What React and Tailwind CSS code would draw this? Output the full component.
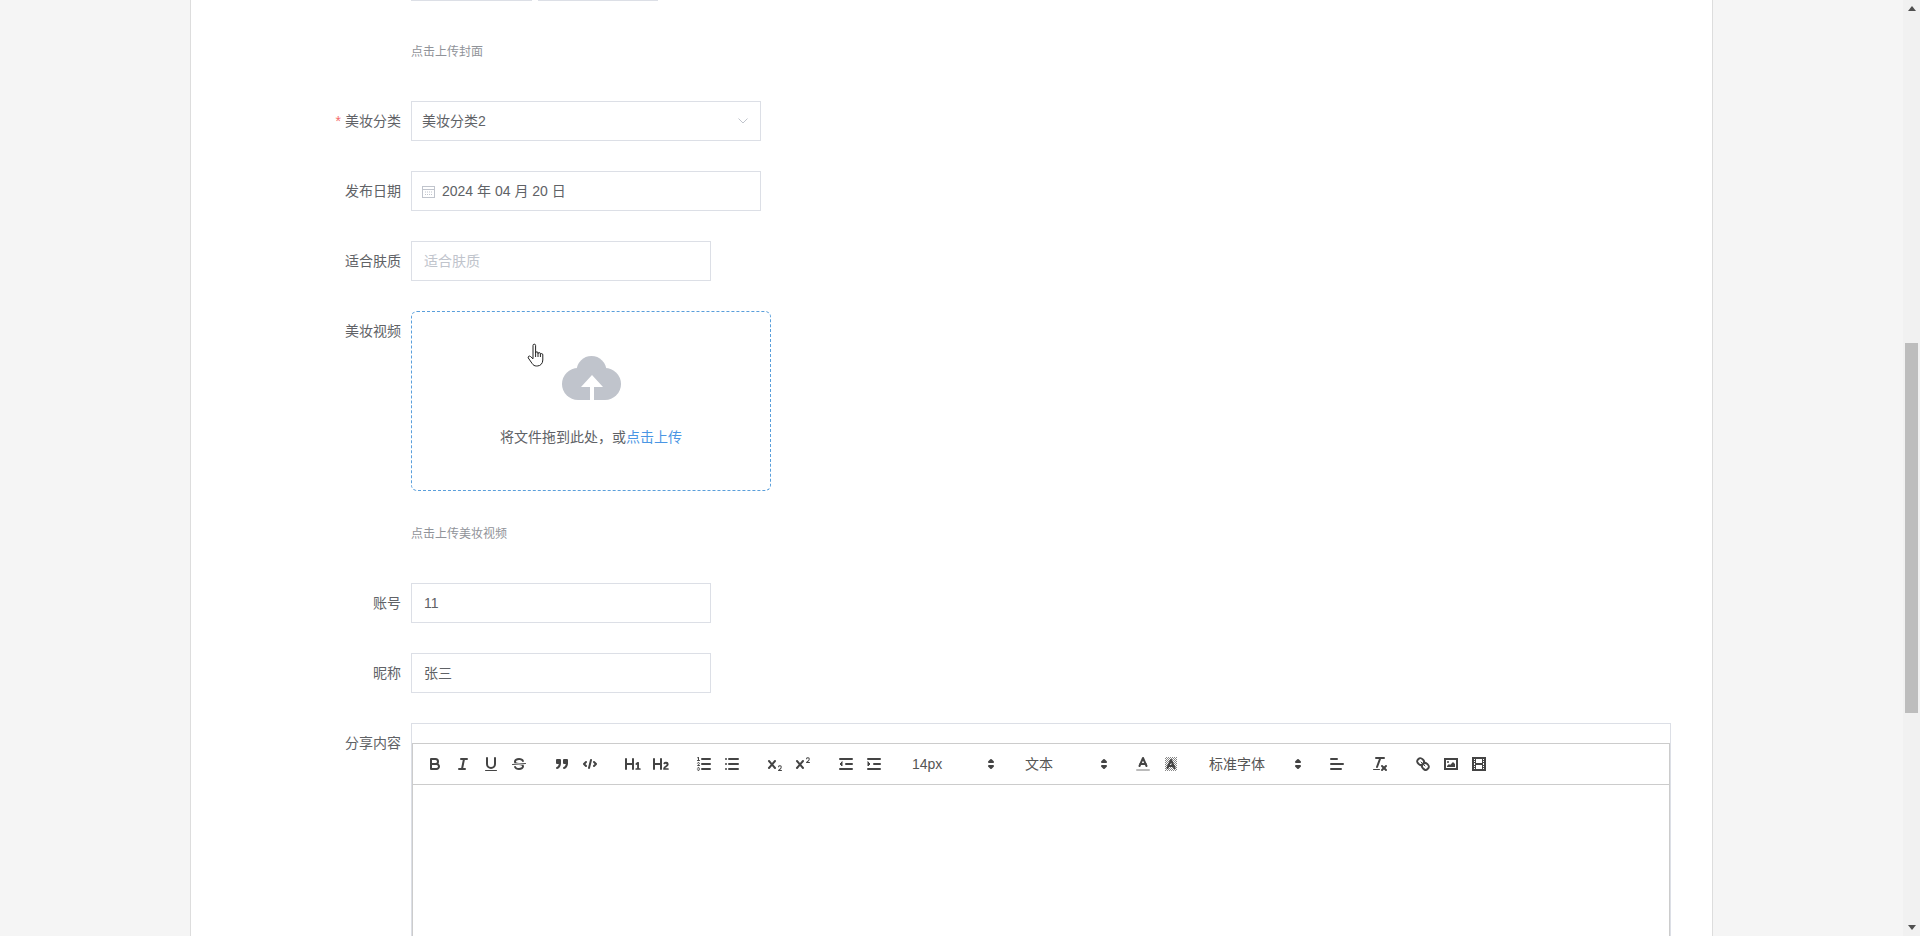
const FONT = "font-['Liberation_Sans','Noto_Sans_CJK_SC',sans-serif]";

function Icon({ children }) {
  return (
    <span className="flex h-6 w-7 items-center justify-center">
      <svg
        viewBox="0 0 18 18"
        className="h-[18px] w-[18px]"
        fill="none"
        stroke="#444"
        strokeWidth="2"
        strokeLinecap="round"
        strokeLinejoin="round"
      >
        {children}
      </svg>
    </span>
  );
}

function Picker({ label, width }) {
  return (
    <span className={`flex h-6 items-center justify-between pl-[9px] pr-[1px] text-sm text-[#555] ${width}`}>
      {label}
      <svg viewBox="0 0 18 18" className="h-[18px] w-[18px]" fill="#444" stroke="#444" strokeWidth="2" strokeLinejoin="round">
        <polygon points="7 11 9 13 11 11 7 11" />
        <polygon points="7 7 9 5 11 7 7 7" />
      </svg>
    </span>
  );
}

function Toolbar() {
  return (
    <div className="flex h-[42px] items-center gap-[15px] border-y border-[#ccc] px-2">
      <div className="flex">
        <Icon>
          <path d="M5,4H9.5A2.5,2.5,0,0,1,12,6.5v0A2.5,2.5,0,0,1,9.5,9H5A0,0,0,0,1,5,9V4A0,0,0,0,1,5,4Z" />
          <path d="M5,9h5.5A2.5,2.5,0,0,1,13,11.5v0A2.5,2.5,0,0,1,10.5,14H5a0,0,0,0,1,0,0V9A0,0,0,0,1,5,9Z" />
        </Icon>
        <Icon>
          <line x1="7" x2="13" y1="4" y2="4" />
          <line x1="5" x2="11" y1="14" y2="14" />
          <line x1="8" x2="10" y1="14" y2="4" />
        </Icon>
        <Icon>
          <path d="M5,3V9a4.012,4.012,0,0,0,4,4H9a4.012,4.012,0,0,0,4-4V3" />
          <rect x="3" y="15" width="12" height="1" rx=".5" ry=".5" fill="#444" stroke="none" />
        </Icon>
        <Icon>
          <line x1="15.5" x2="2.5" y1="8.5" y2="9.5" strokeWidth="1" />
          <path fill="#444" stroke="none" d="M9.007,8C6.542,7.791,6,7.519,6,6.5,6,5.792,7.283,5,9,5c1.571,0,2.765.679,2.969,1.309a1,1,0,0,0,1.9-.617C13.356,4.106,11.354,3,9,3,6.2,3,4,4.538,4,6.5a3.2,3.2,0,0,0,.5,1.843Z" />
          <path fill="#444" stroke="none" d="M8.984,10C11.457,10.208,12,10.479,12,11.5c0,.708-1.283,1.5-3,1.5-1.571,0-2.765-.679-2.969-1.309a1,1,0,1,0-1.9.617C4.644,13.894,6.646,15,9,15c2.8,0,5-1.538,5-3.5a3.2,3.2,0,0,0-.5-1.843Z" />
        </Icon>
      </div>
      <div className="flex">
        <Icon>
          <rect x="4" y="5" width="3" height="3" fill="#444" />
          <rect x="11" y="5" width="3" height="3" fill="#444" />
          <path d="M7,8c0,4.031-3,5-3,5" fill="#444" />
          <path d="M14,8c0,4.031-3,5-3,5" fill="#444" />
        </Icon>
        <Icon>
          <polyline points="5 7 3 9 5 11" />
          <polyline points="13 7 15 9 13 11" />
          <line x1="10" x2="8" y1="5" y2="13" />
        </Icon>
      </div>
      <div className="flex">
        <Icon>
          <path fill="#444" stroke="none" d="M10,4V14a1,1,0,0,1-2,0V10H3v4a1,1,0,0,1-2,0V4A1,1,0,0,1,3,4V8H8V4a1,1,0,0,1,2,0Zm6.06787,9.209H14.98975V7.59863a.54085.54085,0,0,0-.605-.60547h-.62744a1.01119,1.01119,0,0,0-.748.29688L11.645,8.56641a.5435.5435,0,0,0-.022.8584l.28613.30762a.53861.53861,0,0,0,.84717.0332l.09912-.08789a1.2137,1.2137,0,0,0,.2417-.35254h.02246s-.01123.30859-.01123.60547V13.209H12.041a.54085.54085,0,0,0-.605.60547v.43945a.54085.54085,0,0,0,.605.60547h4.02686a.54085.54085,0,0,0,.605-.60547v-.43945A.54085.54085,0,0,0,16.06787,13.209Z" />
        </Icon>
        <Icon>
          <path fill="#444" stroke="none" d="M16.73975,13.81445v.43945a.54085.54085,0,0,1-.605.60547H11.855a.58392.58392,0,0,1-.64893-.60547V14.0127c0-2.90527,3.39941-3.42187,3.39941-4.55469a.77675.77675,0,0,0-.84717-.78125,1.17684,1.17684,0,0,0-.83594.38477c-.2749.26367-.561.374-.85791.13184l-.4292-.34082c-.30811-.24219-.38525-.51758-.1543-.81445a2.97155,2.97155,0,0,1,2.45361-1.17676,2.45393,2.45393,0,0,1,2.68408,2.40918c0,2.45312-3.1792,2.92676-3.27832,3.93848h2.79443A.54085.54085,0,0,1,16.73975,13.81445ZM9,3A.99974.99974,0,0,0,8,4V8H3V4A1,1,0,0,0,1,4V14a1,1,0,0,0,2,0V10H8v4a1,1,0,0,0,2,0V4A.99974.99974,0,0,0,9,3Z" />
        </Icon>
      </div>
      <div className="flex">
        <Icon>
          <line x1="7" x2="15" y1="4" y2="4" />
          <line x1="7" x2="15" y1="9" y2="9" />
          <line x1="7" x2="15" y1="14" y2="14" />
          <line x1="2.5" x2="4.5" y1="5.5" y2="5.5" strokeWidth="1" />
          <path fill="#444" stroke="none" d="M3.5,6A0.5,0.5,0,0,1,3,5.5V3.085l-0.276.138A0.5,0.5,0,0,1,2.053,3c-0.124-.247-0.023-0.324.224-0.447l1-.5A0.5,0.5,0,0,1,4,2.5v3A0.5,0.5,0,0,1,3.5,6Z" />
          <path strokeWidth="1" d="M4.5,10.5h-2c0-.234,1.85-1.076,1.85-2.234A0.959,0.959,0,0,0,2.5,8.156" />
          <path strokeWidth="1" d="M2.5,14.846a0.959,0.959,0,0,0,1.85-.109A0.7,0.7,0,0,0,3.75,14a0.688,0.688,0,0,0,.6-0.736,0.959,0.959,0,0,0-1.85-.109" />
        </Icon>
        <Icon>
          <line x1="6" x2="15" y1="4" y2="4" />
          <line x1="6" x2="15" y1="9" y2="9" />
          <line x1="6" x2="15" y1="14" y2="14" />
          <line x1="3" x2="3" y1="4" y2="4" />
          <line x1="3" x2="3" y1="9" y2="9" />
          <line x1="3" x2="3" y1="14" y2="14" />
        </Icon>
      </div>
      <div className="flex">
        <Icon>
          <path fill="#444" stroke="none" d="M15.5,15H13.861a3.858,3.858,0,0,0,1.914-2.975,1.8,1.8,0,0,0-1.6-1.751A1.921,1.921,0,0,0,12.021,11.7a0.50013,0.50013,0,1,0,.957.291h0a0.914,0.914,0,0,1,1.053-.725,0.81,0.81,0,0,1,.744.762c0,1.076-1.16971,1.86982-1.93971,2.43082A1.45639,1.45639,0,0,0,12,15.5a0.5,0.5,0,0,0,.5.5h3A0.5,0.5,0,0,0,15.5,15Z" />
          <path fill="#444" stroke="none" d="M9.65,5.241a1,1,0,0,0-1.409.108L6,7.964,3.759,5.349A1,1,0,0,0,2.192,6.59178Q2.21541,6.6213,2.241,6.649L4.684,9.5,2.241,12.35A1,1,0,0,0,3.71,13.70722q0.02557-.02768.049-0.05722L6,11.036,8.241,13.65a1,1,0,1,0,1.567-1.24277Q9.78459,12.3777,9.759,12.35L7.316,9.5,9.759,6.651A1,1,0,0,0,9.65,5.241Z" />
        </Icon>
        <Icon>
          <path fill="#444" stroke="none" d="M15.5,7H13.861a4.015,4.015,0,0,0,1.914-2.975,1.8,1.8,0,0,0-1.6-1.751A1.922,1.922,0,0,0,12.021,3.7a0.5,0.5,0,1,0,.957.291,0.917,0.917,0,0,1,1.053-.725,0.81,0.81,0,0,1,.744.762c0,1.077-1.164,1.925-1.934,2.486A1.423,1.423,0,0,0,12,7.5a0.5,0.5,0,0,0,.5.5h3A0.5,0.5,0,0,0,15.5,7Z" />
          <path fill="#444" stroke="none" d="M9.651,5.241a1,1,0,0,0-1.41.108L6,7.964,3.759,5.349a1,1,0,1,0-1.519,1.3L4.683,9.5,2.241,12.35a1,1,0,1,0,1.519,1.3L6,11.036l2.241,2.615a1,1,0,0,0,1.519-1.3L7.317,9.5,9.759,6.651A1,1,0,0,0,9.651,5.241Z" />
        </Icon>
      </div>
      <div className="flex">
        <Icon>
          <line x1="3" x2="15" y1="14" y2="14" />
          <line x1="3" x2="15" y1="4" y2="4" />
          <line x1="9" x2="15" y1="9" y2="9" />
          <polyline points="5 7 5 11 3 9 5 7" fill="#444" strokeWidth="1" />
        </Icon>
        <Icon>
          <line x1="3" x2="15" y1="14" y2="14" />
          <line x1="3" x2="15" y1="4" y2="4" />
          <line x1="9" x2="15" y1="9" y2="9" />
          <polyline points="3 7 3 11 5 9 3 7" fill="#444" strokeWidth="1" />
        </Icon>
      </div>
      <Picker label="14px" width="w-[98px]" />
      <Picker label="文本" width="w-[98px]" />
      <div className="flex">
        <Icon>
          <line x1="3" x2="15" y1="15" y2="15" stroke="#bbb" />
          <polyline points="5.5 11 9 3 12.5 11" />
          <line x1="11.63" x2="6.38" y1="9" y2="9" />
        </Icon>
        <Icon>
          <defs>
            <pattern id="hatch" width="2" height="2" patternUnits="userSpaceOnUse">
              <rect width="1" height="1" fill="#888" stroke="none" />
              <rect x="1" y="1" width="1" height="1" fill="#888" stroke="none" />
            </pattern>
          </defs>
          <rect x="3" y="2" width="12" height="14" fill="url(#hatch)" stroke="none" />
          <polyline points="5.5 13 9 5 12.5 13" />
          <line x1="11.63" x2="6.38" y1="11" y2="11" />
        </Icon>
      </div>
      <Picker label="标准字体" width="w-[108px]" />
      <Icon>
        <line x1="3" x2="15" y1="9" y2="9" />
        <line x1="3" x2="13" y1="14" y2="14" />
        <line x1="3" x2="9" y1="4" y2="4" />
      </Icon>
      <Icon>
        <line x1="5" x2="13" y1="3" y2="3" />
        <line x1="6" x2="9.35" y1="12" y2="3" />
        <line x1="11" x2="15" y1="11" y2="15" />
        <line x1="15" x2="11" y1="11" y2="15" />
        <rect x="2" y="14" width="7" height="1" rx=".5" ry=".5" fill="#444" stroke="none" />
      </Icon>
      <div className="flex">
        <Icon>
          <line x1="7" x2="11" y1="7" y2="11" strokeWidth="1" />
          <path d="M8.9,4.577a3.476,3.476,0,0,1,.36,4.679A3.476,3.476,0,0,1,4.577,8.9C3.185,7.5,2.035,6.4,4.217,4.217S7.5,3.185,8.9,4.577Z" />
          <path d="M13.423,9.1a3.476,3.476,0,0,0-4.679-.36,3.476,3.476,0,0,0,.36,4.679c1.392,1.392,2.5,2.542,4.679.36S14.815,10.5,13.423,9.1Z" />
        </Icon>
        <Icon>
          <rect x="3" y="4" width="12" height="10" strokeLinejoin="miter" />
          <circle cx="6" cy="7" r="1" fill="#444" stroke="none" />
          <polyline points="5 12 5 11 7 9 8 10 11 7 13 9 13 12 5 12" fill="#444" stroke="none" />
        </Icon>
        <Icon>
          <rect x="3" y="3" width="12" height="12" strokeLinejoin="miter" />
          <rect x="5" y="3" width="1" height="12" fill="#444" stroke="none" />
          <rect x="12" y="3" width="1" height="12" fill="#444" stroke="none" />
          <rect x="5" y="8" width="8" height="2" fill="#444" stroke="none" />
          <rect x="3" y="5" width="3" height="1" fill="#444" stroke="none" />
          <rect x="3" y="7" width="3" height="1" fill="#444" stroke="none" />
          <rect x="3" y="10" width="3" height="1" fill="#444" stroke="none" />
          <rect x="3" y="12" width="3" height="1" fill="#444" stroke="none" />
          <rect x="12" y="5" width="3" height="1" fill="#444" stroke="none" />
          <rect x="12" y="7" width="3" height="1" fill="#444" stroke="none" />
          <rect x="12" y="10" width="3" height="1" fill="#444" stroke="none" />
          <rect x="12" y="12" width="3" height="1" fill="#444" stroke="none" />
        </Icon>
      </div>
    </div>
  );
}

function FormRow({ label, required, className = "mb-[30px]", children }) {
  return (
    <div className={`flex ${className}`}>
      <label className="w-[220px] shrink-0 pr-[10px] text-right text-sm leading-10 text-[#606266]">
        {required && <span className="mr-1 text-[#f56c6c]">*</span>}
        {label}
      </label>
      <div className="min-w-0 flex-1">{children}</div>
    </div>
  );
}

function Hint({ children, className = "" }) {
  return <div className={`ml-[220px] text-xs leading-5 text-[#909399] ${className}`}>{children}</div>;
}

function TextBox({ value, placeholder }) {
  return (
    <div className={`flex h-10 w-[300px] items-center border border-[#dcdfe6] bg-white px-3 text-sm ${value ? "text-[#606266]" : "text-[#c0c4cc]"}`}>
      {value || placeholder}
    </div>
  );
}

export default function App() {
  return (
    <div className={`flex h-[936px] overflow-hidden bg-[#f5f5f5] ${FONT}`}>
      <div className="flex-1 pl-[190px]">
        <div className="relative h-full w-[1523px] border-x border-[#ddd] bg-white">
          <div className="ml-[220px] flex gap-[6px]">
            <div className="h-px w-[121px] bg-[#dcdfe6]" />
            <div className="h-px w-[120px] bg-[#dcdfe6]" />
          </div>
          <Hint className="mt-[41px] mb-[39px]">点击上传封面</Hint>

          <FormRow label="美妆分类" required>
            <div className="flex h-10 w-[350px] items-center justify-between border border-[#dcdfe6] bg-white pl-[10px] pr-3 text-sm text-[#606266]">
              美妆分类2
              <svg viewBox="0 0 10 6" className="h-[6px] w-[10px]" fill="none" stroke="#c0c4cc">
                <polyline points="0.5 0.5 5 5 9.5 0.5" />
              </svg>
            </div>
          </FormRow>

          <FormRow label="发布日期">
            <div className="flex h-10 w-[350px] items-center gap-[7px] border border-[#dcdfe6] bg-white pl-[10px] text-sm text-[#606266]">
              <svg viewBox="0 0 13 13" className="h-[13px] w-[13px]" fill="none" stroke="#c0c4cc">
                <rect x="0.5" y="1.5" width="12" height="11" />
                <line x1="0.5" x2="12.5" y1="4.5" y2="4.5" />
                <line x1="3" x2="10" y1="7" y2="7" strokeDasharray="1 1" />
                <line x1="3" x2="10" y1="9.5" y2="9.5" strokeDasharray="1 1" />
              </svg>
              2024 年 04 月 20 日
            </div>
          </FormRow>

          <FormRow label="适合肤质">
            <TextBox placeholder="适合肤质" />
          </FormRow>

          <FormRow label="美妆视频" className="mb-[33px]">
            <div className="flex h-[180px] w-[360px] flex-col items-center rounded-md border border-dashed border-[#5a9fdb] bg-white pt-[44px]">
              <svg viewBox="0 0 59 44" className="h-[44px] w-[59px]">
                <circle cx="29.5" cy="15" r="15" fill="#c0c4cc" />
                <circle cx="16" cy="28" r="16" fill="#c0c4cc" />
                <circle cx="43" cy="28" r="16" fill="#c0c4cc" />
                <rect x="16" y="20" width="27" height="24" fill="#c0c4cc" />
                <path fill="#fff" d="M30 19L41 31H32V44H28V31H19Z" />
              </svg>
              <div className="mt-[27px] text-sm leading-5 text-[#606266]">
                将文件拖到此处，或<span className="text-[#4a96e4]">点击上传</span>
              </div>
            </div>
          </FormRow>
          <Hint className="mb-[39px]">点击上传美妆视频</Hint>

          <FormRow label="账号">
            <TextBox value="11" />
          </FormRow>

          <FormRow label="昵称">
            <TextBox value="张三" />
          </FormRow>

          <FormRow label="分享内容" className="mb-0">
            <div className="h-[400px] w-[1260px] border border-[#dcdfe6] pt-[19px]">
              <div className="h-full border-x border-[#ccc]">
                <Toolbar />
              </div>
            </div>
          </FormRow>

          {/* hand cursor from the capture */}
          <svg viewBox="0 0 18 24" className="absolute left-[336px] top-[343px] h-[24px] w-[18px]" fill="#fff" stroke="#222" strokeWidth="1" strokeLinejoin="round">
            <path d="M6 2.5a1.3 1.3 0 0 1 2.6 0V10a1.2 1.2 0 0 1 2.4 0v.8a1.2 1.2 0 0 1 2.4 0v.9a1.2 1.2 0 0 1 2.4.2V17c0 3.5-2.4 6-5.6 6H9.5c-2 0-3.2-.8-4.3-2.4L1.3 15c-.8-1.3 1-2.7 2.2-1.5L6 15.8Z" />
            <line x1="8.6" x2="8.6" y1="10" y2="14" />
            <line x1="11" x2="11" y1="10.8" y2="14" />
            <line x1="13.4" x2="13.4" y1="11.7" y2="14" />
          </svg>
        </div>
      </div>

      {/* page scrollbar */}
      <div className="flex w-[17px] flex-col items-center bg-[#f1f1f1]">
        <svg viewBox="0 0 8 5" className="mt-[6px] h-[5px] w-[8px]" fill="#505050">
          <polygon points="4 0 8 5 0 5" />
        </svg>
        <div className="mt-[332px] h-[370px] w-[13px] bg-[#bdbdbd]" />
        <svg viewBox="0 0 8 5" className="mt-auto mb-[6px] h-[5px] w-[8px]" fill="#505050">
          <polygon points="0 0 8 0 4 5" />
        </svg>
      </div>
    </div>
  );
}
